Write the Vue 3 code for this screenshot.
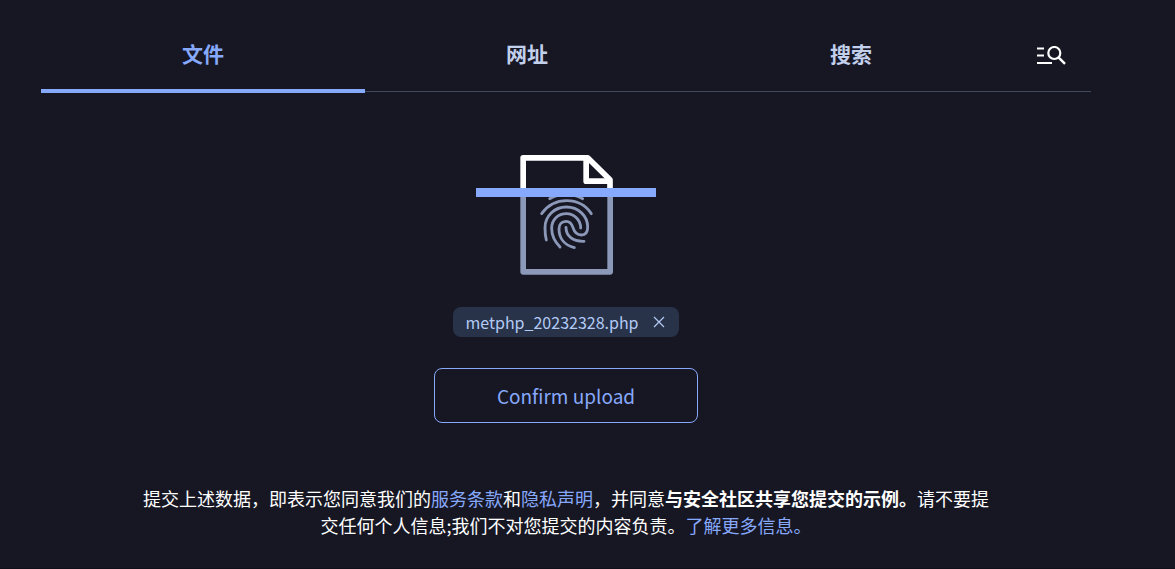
<script setup>
import { ref } from 'vue'

const tabs = ['文件', '网址', '搜索']
const active = ref('文件')
const fileName = ref('metphp_20232328.php')
</script>

<template>
  <main class="page">
    <nav class="tabs">
      <button
        v-for="tab in tabs"
        :key="tab"
        type="button"
        class="tab"
        :class="{ active: tab === active }"
        @click="active = tab"
      >{{ tab }}</button>
      <button type="button" class="advanced" aria-label="高级搜索">
        <svg class="advanced-icon" viewBox="0 0 30 20" fill="none" stroke="#fff" aria-hidden="true">
          <path d="M1 2.5H8M1 9.5H8M1 17H16" stroke-width="2.2" />
          <circle cx="18.3" cy="7" r="6" stroke-width="2.2" />
          <path d="M22.5 11.3L29 17.8" stroke-width="2.5" />
        </svg>
      </button>
    </nav>

    <form class="upload" @submit.prevent>
      <svg class="scan" viewBox="30 30 540 360" fill="none" stroke-linejoin="round" aria-hidden="true">
        <path d="M171.5 140V380.5H432.5V140" stroke="#8b98b8" stroke-width="17" />
        <g stroke="#fff" stroke-width="17">
          <path d="M171.5 140V38.5H365L432 104V140" />
          <path d="M360.5 38.5V108.5H432" />
        </g>
        <g stroke="#8b98b8" stroke-width="8.5" stroke-linecap="round">
          <path d="M251 161Q300 135 350 161" />
          <path d="M227 206C244 182 271 167 302 167S360 182 376 206" />
          <path d="M241 285C238 274 237 262 237 248C237 213 265 186 301 186S365 213 365 246C365 261 358 270 346 270C331 270 325 261 321 248C317 235 310 229 300 229C287 229 279 238 279 252C279 280 296 301 325 308" />
          <path d="M282 306C265 289 257 270 257 250C257 224 276 206 301 206S344 226 344 249" />
          <path d="M300 247C300 273 320 290 354 289" />
        </g>
        <path d="M30 129H570V156H30Z" fill="#87a9fb" />
      </svg>

      <div class="chip">
        <span>{{ fileName }}</span>
        <button type="button" class="remove" aria-label="移除文件">
          <svg class="remove-icon" viewBox="0 0 12 12" fill="none" stroke="#b3caf5" stroke-width="1.2" aria-hidden="true">
            <path d="M1 1L11 11M11 1L1 11" />
          </svg>
        </button>
      </div>

      <button type="submit" class="confirm">Confirm upload</button>
    </form>

    <p class="terms">提交上述数据，即表示您同意我们的<a href="#terms">服务条款</a>和<a href="#privacy">隐私声明</a>，并同意<strong>与安全社区共享您提交的示例。</strong>请不要提交任何个人信息;我们不对您提交的内容负责。<a href="#more">了解更多信息。</a></p>
  </main>
</template>

<style>
body {
  background: #171724;
}
</style>

<style scoped>
.page {
  box-sizing: border-box;
  min-height: 100vh;
  padding: 18px 84px 28px 41px;
  border-bottom: 1px solid #10101a;
  font-family: "Noto Sans CJK SC", "Noto Sans", sans-serif;
  color: #fff;
}
button {
  padding: 0;
  border: 0;
  background: none;
  font: inherit;
  color: inherit;
  cursor: pointer;
}
.tabs {
  display: flex;
  height: 75px;
  background: linear-gradient(#3f4a60, #3f4a60) 0 73px / 100% 1px no-repeat;
}
.tab {
  flex: 1;
  border-bottom: 4px solid transparent;
  font-size: 21px;
  font-weight: 700;
  line-height: 71px;
  color: #c2d0ec;
}
.tab.active {
  border-color: #87a9fb;
  color: #87a9fb;
}
.advanced {
  display: flex;
  align-items: center;
  justify-content: center;
  width: 78px;
  padding-right: 2px;
}
.advanced-icon {
  width: 30px;
  height: 20px;
}
.upload {
  display: flex;
  flex-direction: column;
  align-items: center;
  padding-top: 62px;
}
.scan {
  width: 180px;
  height: 120px;
}
.chip {
  display: flex;
  align-items: center;
  gap: 14px;
  height: 30px;
  margin-top: 32px;
  padding: 0 14px 0 12px;
  border-radius: 8px;
  background: #28334a;
  font-size: 16px;
  line-height: 30px;
  color: #b3caf5;
}
.remove {
  display: flex;
}
.remove-icon {
  width: 12px;
  height: 12px;
}
.confirm {
  width: 264px;
  height: 55px;
  margin-top: 31px;
  border: 1px solid #87a9fb;
  border-radius: 8px;
  font-size: 19px;
  color: #87a9fb;
}
.terms {
  max-width: 860px;
  margin: 62px auto 0;
  font-size: 18px;
  line-height: 27px;
  text-align: center;
}
.terms a {
  color: #87a9fb;
  text-decoration: none;
}
</style>
